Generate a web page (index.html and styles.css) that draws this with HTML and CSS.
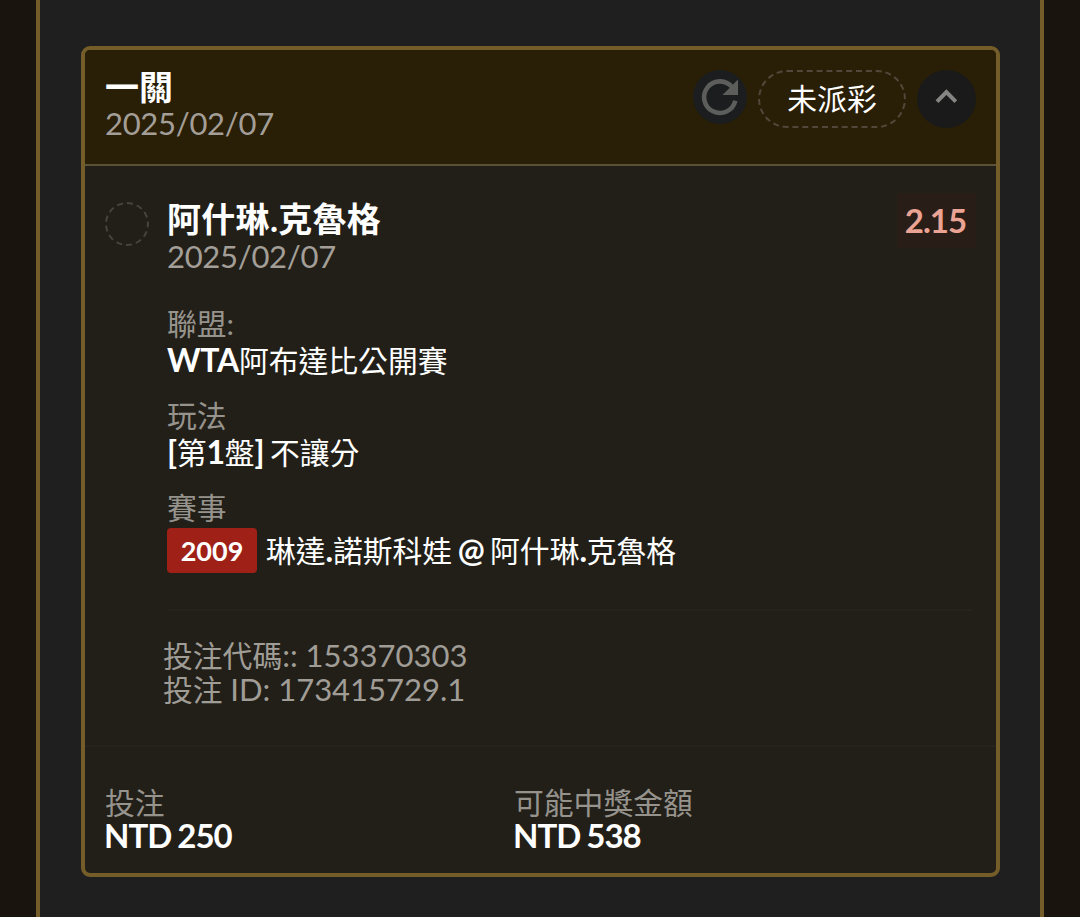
FILE: index.html
```
<!DOCTYPE html>
<html lang="zh-Hant">
<head>
  <meta charset="UTF-8">
  <meta name="viewport" content="width=device-width, initial-scale=1.0">
  <title>投注紀錄</title>
  <link rel="stylesheet" href="styles.css">
</head>
<body>
  <div class="panel">
    <div class="bet-card">
      <div class="bet-header">
        <div class="bet-title">
          <h2 class="title">一關</h2>
          <p class="date">2025/02/07</p>
        </div>
        <div class="bet-actions">
          <a href="javascript:void(0);" class="btn-refresh">
            <svg width="54" height="54" viewBox="0 0 54 54">
              <path d="M39.5 17.6A15.8 15.8 0 1 0 42.3 30.8" fill="none" stroke="#5d5d5b" stroke-width="4.6"/>
              <path d="M45 9.5V25H29.5z" fill="#5d5d5b"/>
            </svg>
          </a>
          <span class="status">未派彩</span>
          <a href="javascript:void(0);" class="btn-toggle">
            <svg width="59" height="58" viewBox="0 0 59 58">
              <path d="M20 31.6l9.4-9.4 9.4 9.4" fill="none" stroke="#858583" stroke-width="4"/>
            </svg>
          </a>
        </div>
      </div>

      <div class="bet-body">
        <span class="result-icon"></span>
        <div class="bet-detail">
          <div class="selection">
            <div>
              <h3 class="title name">阿什琳.克魯格</h3>
              <p class="date">2025/02/07</p>
            </div>
            <span class="odds">2.15</span>
          </div>
          <dl class="info">
            <dt>聯盟:</dt>
            <dd><b>WTA</b>阿布達比公開賽</dd>
            <dt>玩法</dt>
            <dd><b>[</b>第<b>1</b>盤<b>]</b> 不讓分</dd>
            <dt>賽事</dt>
            <dd class="match"><span class="match-no">2009</span><span>琳達<b>.</b>諾斯科娃 <b>@</b> 阿什琳<b>.</b>克魯格</span></dd>
          </dl>
          <div class="codes">
            <p>投注代碼<span>:: 153370303</span></p>
            <p>投注 <span>ID: 173415729.1</span></p>
          </div>
        </div>
      </div>

      <div class="bet-footer">
        <div class="amount">
          <p class="label">投注</p>
          <p class="value">NTD 250</p>
        </div>
        <div class="amount">
          <p class="label">可能中獎金額</p>
          <p class="value">NTD 538</p>
        </div>
      </div>
    </div>
  </div>
</body>
</html>
```
FILE: styles.css
```
* {
  margin: 0;
  padding: 0;
  box-sizing: border-box;
}
a {
  color: inherit;
  text-decoration: none;
}
body {
  height: 917px;
  padding: 0 36px;
  overflow: hidden;
  font-family: Lato, "Noto Sans CJK TC", sans-serif;
  font-size: 29.8px;
  color: #fff;
  background: #19150e;
}
.panel {
  height: 917px;
  padding: 46px 40px 0 41px;
  border: solid #755d29;
  border-width: 0 4px;
  background: #1f1f1f;
}

/* 注單卡片 */
.bet-card {
  height: 831px;
  border: 4px solid #755d29;
  border-radius: 9px;
  background: #221f19;
}
.title {
  font-size: 34px;
  line-height: 36px;
  font-weight: 700;
}
.title.name {
  height: 36px;
  line-height: 34px;
  letter-spacing: .3px;
}
.date {
  font-size: 31px;
  line-height: 36px;
  letter-spacing: -.3px;
  color: #a39f98;
}

/* 標題列 */
.bet-header {
  display: flex;
  justify-content: space-between;
  height: 116px;
  padding: 19px 20px 0;
  border-bottom: 2px solid #5a5137;
  border-radius: 5px 5px 0 0;
  background: #291e06;
}
.bet-actions {
  display: flex;
  align-items: flex-start;
  padding-top: 1px;
}
.btn-refresh,
.btn-toggle {
  border-radius: 50%;
  background: #1a1a1a;
}
.btn-refresh {
  width: 54px;
  height: 54px;
  margin-right: 11px;
  background: #1b1d1e;
}
.btn-toggle {
  width: 59px;
  height: 58px;
  margin-left: 11px;
}
.btn-refresh svg,
.btn-toggle svg {
  display: block;
}
.status {
  width: 148px;
  height: 58px;
  border: 2px dashed #51483a;
  border-radius: 29px;
  line-height: 53px;
  text-align: center;
}

/* 投注內容 */
.bet-body {
  display: flex;
  gap: 18px;
  height: 579px;
  padding: 36px 20px 0;
}
.result-icon {
  flex: none;
  width: 44px;
  height: 44px;
  border: 2px dashed #47433d;
  border-radius: 50%;
}
.bet-detail {
  flex: 1;
}
.selection {
  display: flex;
  justify-content: space-between;
}
.odds {
  width: 79px;
  height: 55px;
  margin-top: -9px;
  padding-right: 2px;
  font-size: 33px;
  line-height: 54px;
  font-weight: 700;
  letter-spacing: -.9px;
  text-align: center;
  color: #eba394;
  background: #291d17;
}
.info {
  height: 306px;
  margin-top: 31px;
  margin-right: 4px;
  border-bottom: 2px solid #26231e;
}
.info dt {
  height: 36px;
  line-height: 38px;
  color: #96938d;
}
.info dd {
  height: 37px;
  margin-bottom: 19px;
  line-height: 39px;
  word-spacing: -2px;
}
.info b {
  font-size: 32px;
  line-height: 30px;
  letter-spacing: -.3px;
}
.info .match {
  display: flex;
  align-items: center;
  gap: 9px;
  height: 45px;
  margin-top: 3px;
  line-height: 37px;
}
.match-no {
  width: 90px;
  height: 45px;
  border-radius: 4px;
  font-size: 27px;
  line-height: 46px;
  font-weight: 700;
  text-align: center;
  background: #9e2016;
}
.codes {
  margin: 28px 0 0 -4px;
  line-height: 34px;
  color: #a09d97;
}
.codes p {
  height: 34px;
}
.codes span {
  font-size: 31px;
  line-height: 30px;
}

/* 金額 */
.bet-footer {
  display: flex;
  padding: 38px 20px 20px;
  border-top: 2px solid #26231e;
}
.amount {
  width: 409px;
}
.amount .label {
  height: 34px;
  line-height: 36px;
  color: #96938d;
}
.amount .value {
  margin-left: -1px;
  font-size: 33px;
  line-height: 32px;
  font-weight: 700;
  letter-spacing: -1px;
  word-spacing: -1px;
}
```
